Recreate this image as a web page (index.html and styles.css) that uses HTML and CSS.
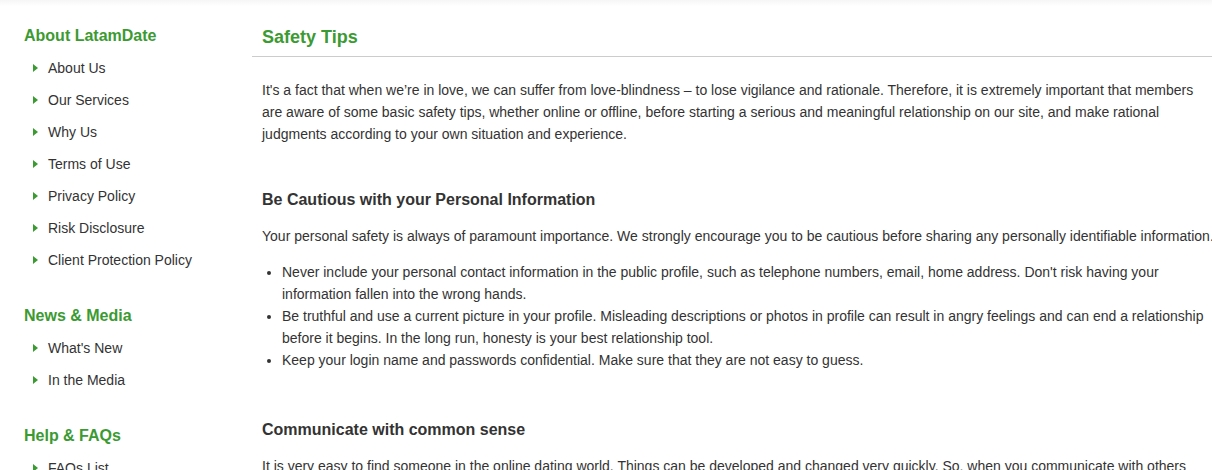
FILE: index.html
```html
<!DOCTYPE html>
<html lang="en">
<head>
<meta charset="utf-8">
<title>Safety Tips</title>
<link rel="stylesheet" href="styles.css">
</head>
<body>
<div class="page">
  <aside class="sidebar">
    <div class="group">
      <h4 class="group-title">About LatamDate</h4>
      <ul class="nav">
        <li><a href="#">About Us</a></li>
        <li><a href="#">Our Services</a></li>
        <li><a href="#">Why Us</a></li>
        <li><a href="#">Terms of Use</a></li>
        <li><a href="#">Privacy Policy</a></li>
        <li><a href="#">Risk Disclosure</a></li>
        <li><a href="#">Client Protection Policy</a></li>
      </ul>
    </div>
    <div class="group">
      <h4 class="group-title">News &amp; Media</h4>
      <ul class="nav">
        <li><a href="#">What's New</a></li>
        <li><a href="#">In the Media</a></li>
      </ul>
    </div>
    <div class="group">
      <h4 class="group-title">Help &amp; FAQs</h4>
      <ul class="nav">
        <li><a href="#">FAQs List</a></li>
        <li><a href="#">Contact Us</a></li>
      </ul>
    </div>
  </aside>
  <main class="main">
    <h2 class="page-title">Safety Tips</h2>
    <div class="content">
      <p class="intro">It's a fact that when we’re in love, we can suffer from love-blindness – to lose vigilance and rationale. Therefore, it is extremely important that members are aware of some basic safety tips, whether online or offline, before starting a serious and meaningful relationship on our site, and make rational judgments according to your own situation and experience.</p>
      <section class="section">
        <h3 class="section-title">Be Cautious with your Personal Information</h3>
        <p>Your personal safety is always of paramount importance. We strongly encourage you to be cautious before sharing any personally identifiable information.</p>
        <ul class="bullets">
          <li>Never include your personal contact information in the public profile, such as telephone numbers, email, home address. Don't risk having your information fallen into the wrong hands.</li>
          <li>Be truthful and use a current picture in your profile. Misleading descriptions or photos in profile can result in angry feelings and can end a relationship before it begins. In the long run, honesty is your best relationship tool.</li>
          <li>Keep your login name and passwords confidential. Make sure that they are not easy to guess.</li>
        </ul>
      </section>
      <section class="section">
        <h3 class="section-title">Communicate with common sense</h3>
        <p>It is very easy to find someone in the online dating world. Things can be developed and changed very quickly. So, when you communicate with others online, please use common sense and trust your instincts.</p>
      </section>
    </div>
  </main>
</div>
</body>
</html>
```

FILE: styles.css
```css
html, body {
  margin: 0;
  padding: 0;
  overflow-x: hidden;
}
body {
  font-family: "Liberation Sans", Arial, sans-serif;
  font-size: 14px;
  color: #333;
  background: linear-gradient(to bottom, #f6f6f6 0, #ffffff 6px) no-repeat;
  background-size: 100% 6px;
  background-color: #fff;
}
.page {
  display: flex;
  align-items: flex-start;
  width: 1217px;
}
.sidebar {
  width: 228px;
  flex: 0 0 228px;
  padding: 24px 0 0 24px;
}
.group {
  margin-bottom: 28px;
}
.group-title {
  margin: 0 0 5px 0;
  padding-top: 1px;
  font-size: 16px;
  line-height: 22px;
  font-weight: bold;
  color: #3c9a32;
}
.nav {
  list-style: none;
  margin: 0;
  padding: 0;
}
.nav li {
  line-height: 32px;
  height: 32px;
  display: flex;
  align-items: center;
  padding-left: 9px;
}
.nav li::before {
  content: "";
  width: 0;
  height: 0;
  border-left: 5px solid #3c9a32;
  border-top: 4.5px solid transparent;
  border-bottom: 4.5px solid transparent;
  margin-right: 10px;
}
.nav a {
  color: #333;
  text-decoration: none;
}
.main {
  flex: 1 1 auto;
  min-width: 0;
}
.page-title {
  margin: 0;
  padding: 25px 0 7px 10px;
  font-size: 18px;
  line-height: 24px;
  font-weight: bold;
  color: #3c9a32;
  border-bottom: 1px solid #cccccc;
}
.content {
  padding: 22px 0 0 10px;
  line-height: 22px;
}
.content p {
  margin: 0 0 14px 0;
}
.content .intro {
  margin-bottom: 43px;
}
.section + .section {
  margin-top: 47px;
}
.section-title {
  margin: 0 0 14px 0;
  padding-top: 1px;
  font-size: 16px;
  line-height: 22px;
  font-weight: bold;
  color: #333;
}
.bullets {
  margin: 0;
  padding-left: 20px;
}
.bullets li {
  line-height: 22px;
}
```
